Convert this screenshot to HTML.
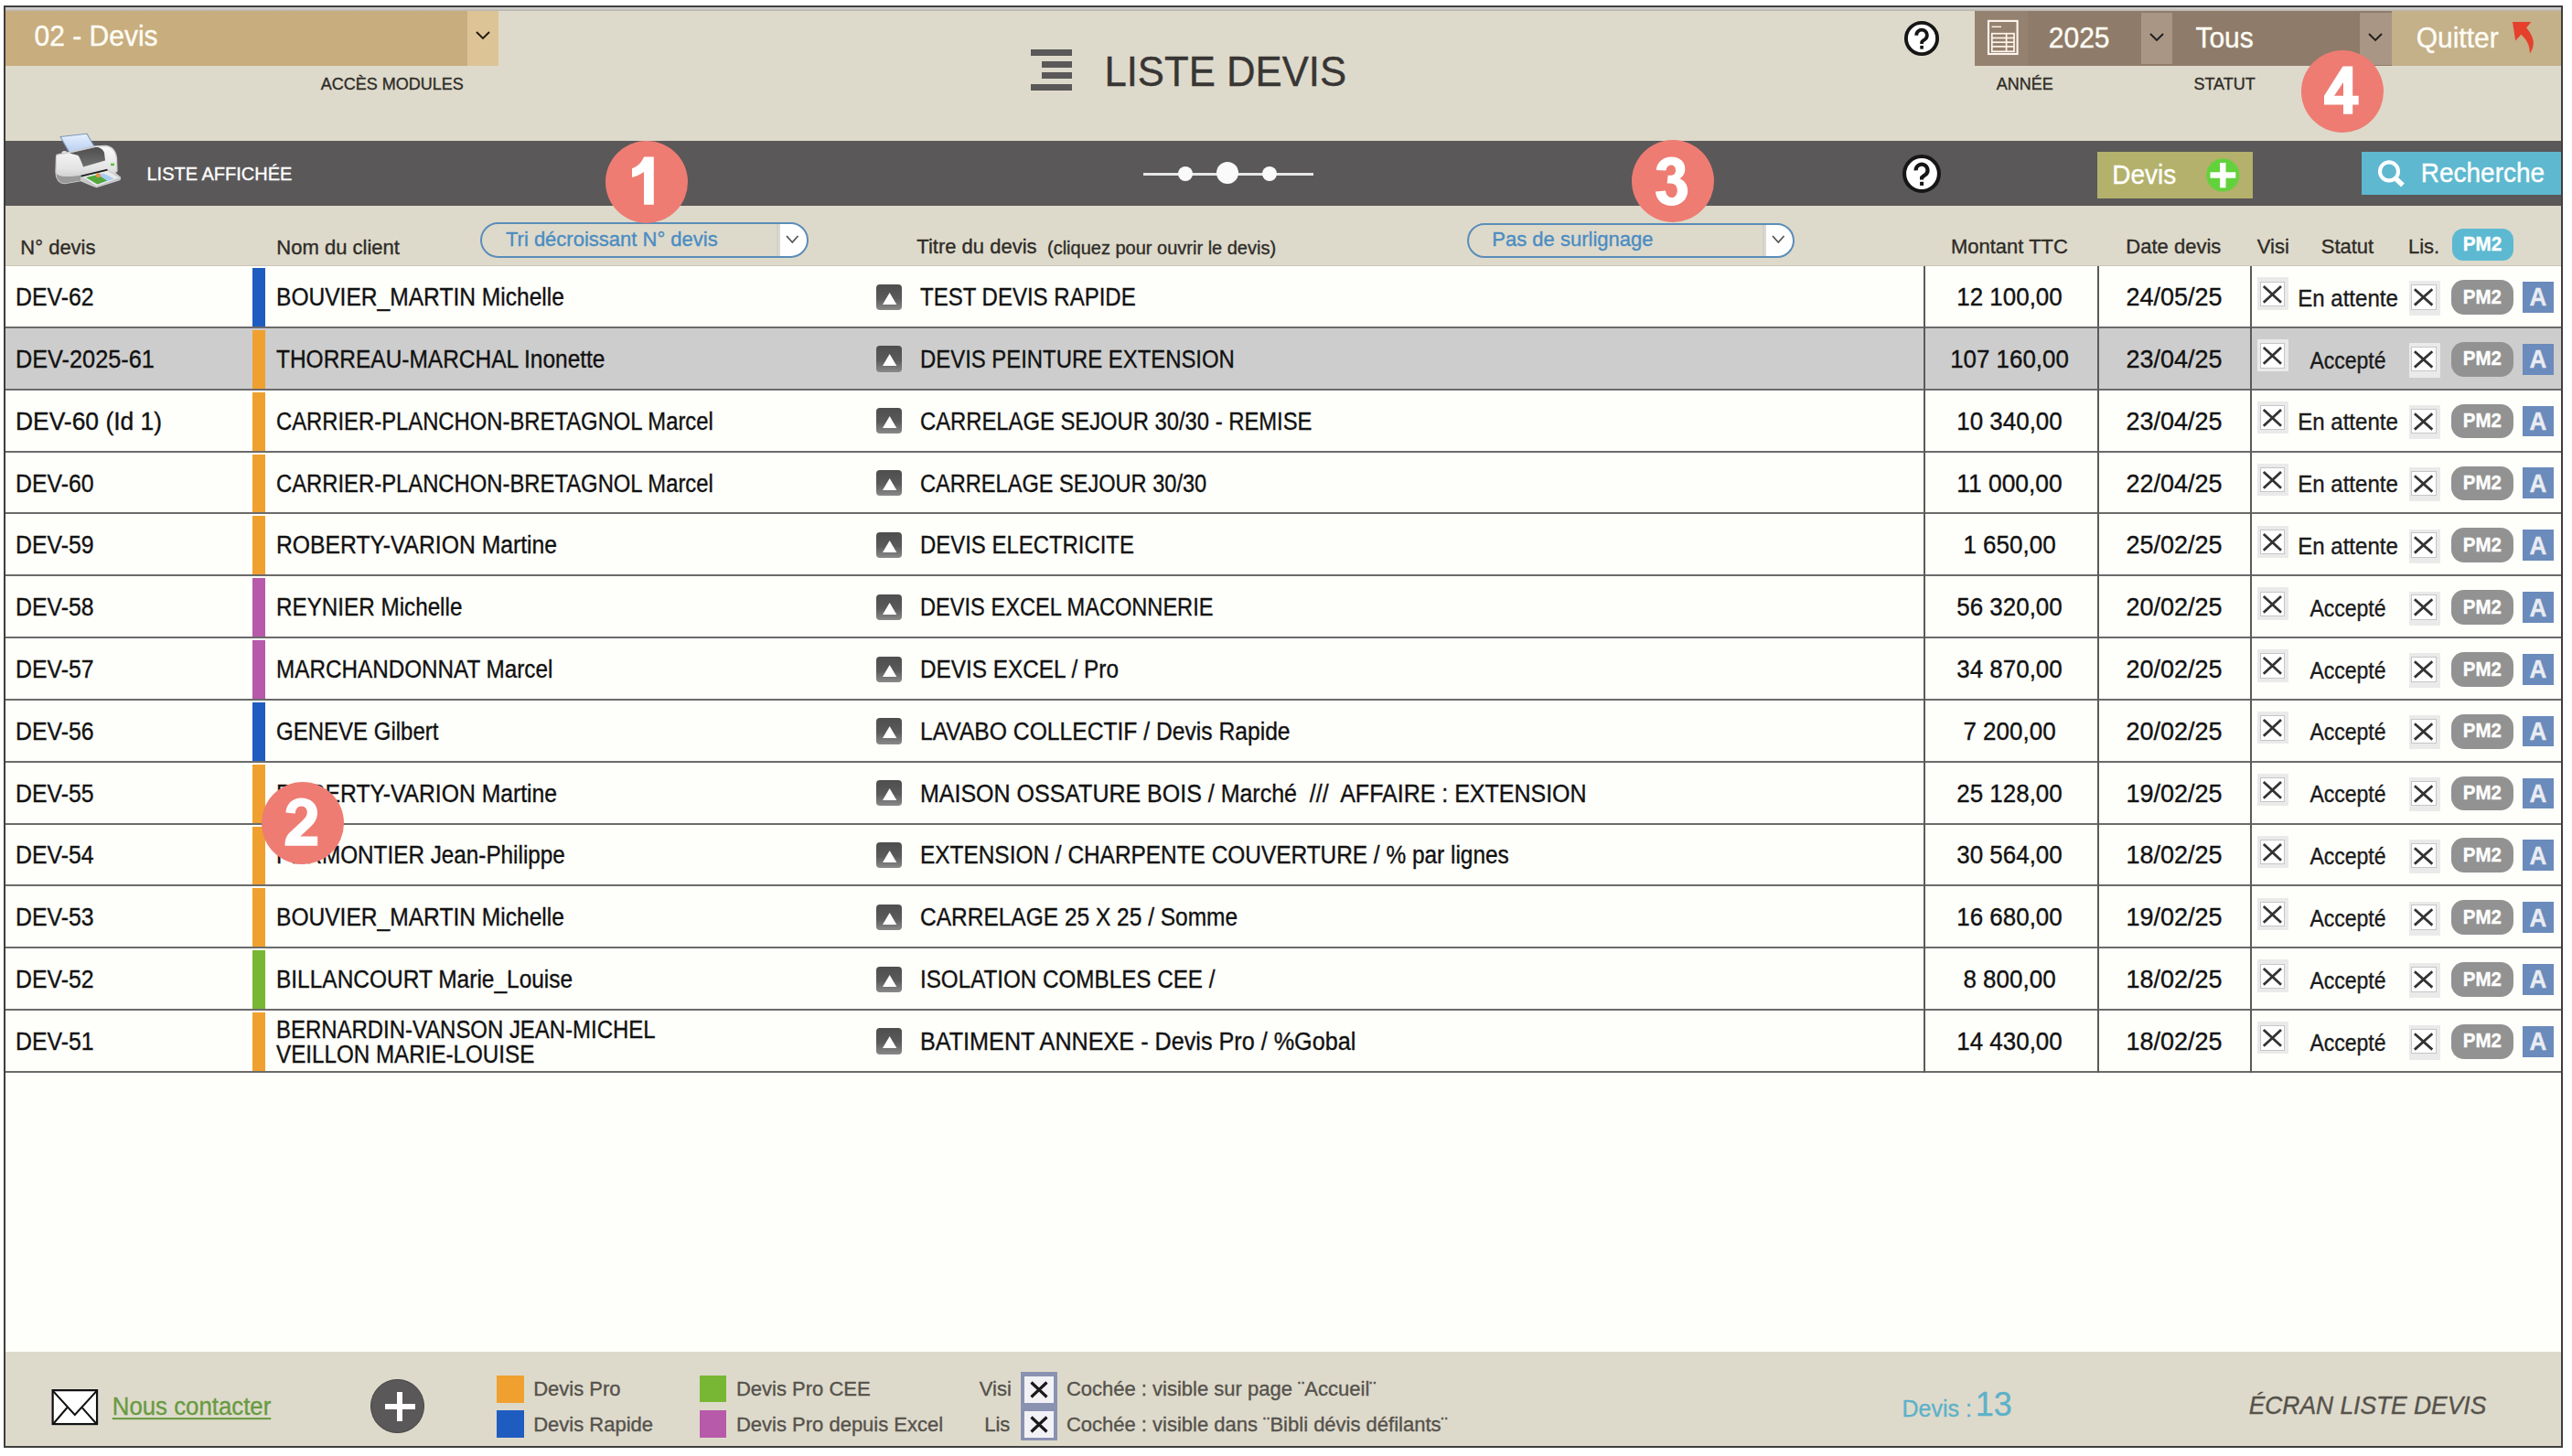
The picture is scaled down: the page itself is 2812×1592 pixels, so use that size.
<!DOCTYPE html><html><head><meta charset="utf-8"><title>Liste devis</title><style>html,body{margin:0;padding:0;background:#FFFFFF;width:2812px;height:1592px;overflow:hidden;}body{position:relative;font-family:"Liberation Sans", sans-serif;} div{-webkit-text-stroke:0.35px currentColor;}</style></head><body>
<div style="position:absolute;left:4.00px;top:6.00px;width:2798.00px;height:1577.00px;background:#3E3E3E;"></div>
<div style="position:absolute;left:6.00px;top:8.00px;width:2794.00px;height:1573.00px;background:#DEDACB;"></div>
<div style="position:absolute;left:6.00px;top:8.00px;width:2794.00px;height:4.00px;background:linear-gradient(#D6D6D6,#B9B4AC);"></div>
<div style="position:absolute;left:6.00px;top:12.00px;width:505.00px;height:60.00px;background:#C8AD7E;"></div>
<div style="position:absolute;left:511.00px;top:12.00px;width:34.00px;height:60.00px;background:#DCC497;"></div>
<svg style="position:absolute;left:519.0px;top:33.1px;overflow:visible" width="18" height="11" viewBox="0 0 18 11"><polyline points="2,2 9.0,9 16,2" fill="none" stroke="#22180C" stroke-width="1.9" stroke-linecap="butt" stroke-linejoin="miter"/></svg>
<div style="position:absolute;left:37.55px;top:24.50px;font-size:30px;line-height:1;white-space:pre;color:#FFFDF5;font-weight:normal;font-style:normal;transform:scale(1.0,1.04);transform-origin:0 25.50px;">02 - Devis</div>
<div style="position:absolute;left:350.82px;top:83.00px;font-size:18px;line-height:1;white-space:pre;color:#2E2C28;font-weight:normal;font-style:normal;transform:scale(1.0,1.04);transform-origin:0 15.30px;">ACCÈS MODULES</div>
<div style="position:absolute;left:1127.00px;top:54.00px;width:45.00px;height:7.00px;background:#5A5858;"></div>
<div style="position:absolute;left:1139.00px;top:66.50px;width:33.00px;height:7.00px;background:#5A5858;"></div>
<div style="position:absolute;left:1139.00px;top:79.30px;width:33.00px;height:7.00px;background:#5A5858;"></div>
<div style="position:absolute;left:1127.00px;top:91.70px;width:45.00px;height:7.00px;background:#5A5858;"></div>
<div style="position:absolute;left:1207.42px;top:56.65px;font-size:43.7px;line-height:1;white-space:pre;color:#383634;font-weight:normal;font-style:normal;transform:scale(1.0,1.04);transform-origin:0 37.15px;">LISTE DEVIS</div>
<svg style="position:absolute;left:2078px;top:19px;overflow:visible" width="46" height="46" viewBox="0 0 46 46"><circle cx="23" cy="23" r="17.1" fill="#FFFFFF" stroke="#161616" stroke-width="3.9"/><g transform="translate(23,23) scale(0.9) translate(-23,-23)"><path d="M16.6,19.4 A6.45,6.45 0 1 1 27.6,23.7 C25.3,25.6 23.1,26.3 23.1,27.6 L23.1,29.6" fill="none" stroke="#161616" stroke-width="4.2"/><rect x="21.1" y="31.8" width="4" height="4.1" fill="#161616"/></g></svg>
<div style="position:absolute;left:2159.00px;top:12.00px;width:456.00px;height:60.00px;background:#8F7B69;"></div>
<div style="position:absolute;left:2159.00px;top:12.00px;width:58.00px;height:60.00px;background:#95816F;"></div>
<div style="position:absolute;left:2340.50px;top:14.00px;width:34.50px;height:56.00px;background:#A99684;"></div>
<svg style="position:absolute;left:2348.5px;top:35.0px;overflow:visible" width="18" height="11" viewBox="0 0 18 11"><polyline points="2,2 9.0,9 16,2" fill="none" stroke="#1E1E1E" stroke-width="1.9" stroke-linecap="butt" stroke-linejoin="miter"/></svg>
<div style="position:absolute;left:2580.00px;top:13.50px;width:35.00px;height:57.00px;background:#A99684;"></div>
<svg style="position:absolute;left:2588.0px;top:35.0px;overflow:visible" width="18" height="11" viewBox="0 0 18 11"><polyline points="2,2 9.0,9 16,2" fill="none" stroke="#1E1E1E" stroke-width="1.9" stroke-linecap="butt" stroke-linejoin="miter"/></svg>
<svg style="position:absolute;left:2172px;top:21px;overflow:visible" width="36" height="40" viewBox="0 0 36 40"><rect x="2" y="1.9" width="31.6" height="36.1" fill="none" stroke="#FFF6EE" stroke-width="2.1"/><line x1="5.5" y1="8.3" x2="16" y2="8.3" stroke="#FFF6EE" stroke-width="1.4"/><rect x="5.8" y="15.7" width="24.2" height="19.6" fill="none" stroke="#FFF6EE" stroke-width="1.7"/><line x1="5.8" y1="20.5" x2="30" y2="20.5" stroke="#FFF6EE" stroke-width="1.7"/><line x1="5.8" y1="25.2" x2="30" y2="25.2" stroke="#FFF6EE" stroke-width="1.7"/><line x1="5.8" y1="29.9" x2="30" y2="29.9" stroke="#FFF6EE" stroke-width="1.7"/><line x1="21.6" y1="15.7" x2="21.6" y2="35.3" stroke="#FFF6EE" stroke-width="1.7"/></svg>
<div style="position:absolute;left:2239.80px;top:26.50px;font-size:30px;line-height:1;white-space:pre;color:#FFFDF5;font-weight:normal;font-style:normal;transform:scale(1.0,1.04);transform-origin:0 25.50px;">2025</div>
<div style="position:absolute;left:2400.40px;top:26.50px;font-size:30px;line-height:1;white-space:pre;color:#FFFDF5;font-weight:normal;font-style:normal;transform:scale(1.0,1.04);transform-origin:0 25.50px;">Tous</div>
<div style="position:absolute;left:2615.00px;top:12.00px;width:185.00px;height:60.00px;background:#C4B089;"></div>
<div style="position:absolute;left:2641.65px;top:26.90px;font-size:30px;line-height:1;white-space:pre;color:#FFFDF5;font-weight:normal;font-style:normal;transform:scale(1.0,1.04);transform-origin:0 25.50px;">Quitter</div>
<svg style="position:absolute;left:2730px;top:15px;overflow:visible" width="50" height="50" viewBox="0 0 50 50"><path d="M17,9.1 L37.2,9.1 L32.1,15.5 C37,21 40,27 39.8,33 C39.6,37 38,41 35.9,43.4 C36,37 34,31 30,26.5 C28.5,25 27.5,23.8 26.4,22.7 L20.2,29.5 Z" fill="#E5402B"/></svg>
<div style="position:absolute;left:2182.82px;top:83.00px;font-size:18px;line-height:1;white-space:pre;color:#2E2C28;font-weight:normal;font-style:normal;transform:scale(1.0,1.04);transform-origin:0 15.30px;">ANNÉE</div>
<div style="position:absolute;left:2398.46px;top:83.00px;font-size:18px;line-height:1;white-space:pre;color:#2E2C28;font-weight:normal;font-style:normal;transform:scale(1.0,1.04);transform-origin:0 15.30px;">STATUT</div>
<div style="position:absolute;left:6.00px;top:154.00px;width:2794.00px;height:71.00px;background:#5A5859;"></div>
<svg style="position:absolute;left:55px;top:140px;overflow:visible" width="85" height="70" viewBox="0 0 85 70"><defs><linearGradient id="pb" x1="0" y1="0" x2="0" y2="1"><stop offset="0" stop-color="#FAFAFA"/><stop offset="0.55" stop-color="#E4E4E4"/><stop offset="1" stop-color="#B8B8B8"/></linearGradient><linearGradient id="pp" x1="0" y1="0" x2="0" y2="1"><stop offset="0" stop-color="#E8F1FF"/><stop offset="1" stop-color="#B4CDF0"/></linearGradient><linearGradient id="pc" x1="0" y1="0" x2="0" y2="1"><stop offset="0" stop-color="#4E4E4E"/><stop offset="1" stop-color="#707070"/></linearGradient></defs><path d="M11,9.5 L40,6.3 L48,20 L21,27 Z" fill="url(#pp)" stroke="#7F96B6" stroke-width="1.1"/><ellipse cx="15.5" cy="27" rx="3" ry="2" fill="#E0E0E0"/><path d="M8.5,29 L21.5,26.5 L49.5,20 L60,19.5 C68,20 71.5,26 72.5,33 L73,47 L70.5,49 L76.5,54 L76,56.5 L50.5,64.5 L47,63.5 L33,57.5 L16,60.5 C9,60.5 6,55 6,48 L6.5,32 C6.5,30 7.5,29 8.5,29 Z" fill="url(#pb)" stroke="#CFCFCF" stroke-width="1.3"/><path d="M6.6,50 C10,53.5 20,54 33,51.8 L33,57.5 L16,60.5 C10,60.5 7,56 6.6,50 Z" fill="#999999"/><path d="M21,27.5 L49.5,21 C54,20.5 57.5,23 59,27 L60,35.5 L36,42.5 C34.5,38 32.5,33 30.5,30 Z" fill="url(#pc)"/><path d="M33.5,53 L62.5,46 L76.5,54.5 L50.5,64 Z" fill="#E9E9E9" stroke="#BDBDBD" stroke-width="0.8"/><path d="M39,54 L58,49.5 L70,55.5 L51.5,61.5 Z" fill="#A8CDF2"/><path d="M39,54 L52,51 L62,57.5 L51.5,61.5 Z" fill="#52A83A"/><circle cx="52.5" cy="51.8" r="2.5" fill="#E8904A"/><path d="M33.5,52.6 L62.5,45.6" stroke="#1E1E1E" stroke-width="1.8"/><rect x="66" y="38.6" width="4" height="2.6" fill="#5CC13A"/></svg>
<div style="position:absolute;left:160.50px;top:179.60px;font-size:20px;line-height:1;white-space:pre;color:#FFFFFF;font-weight:normal;font-style:normal;transform:scale(1.0,1.04);transform-origin:0 17.00px;">LISTE AFFICHÉE</div>
<div style="position:absolute;left:1250.00px;top:189.40px;width:186.00px;height:2.20px;background:#E6E6E6;"></div>
<div style="position:absolute;left:1288px;top:182.4px;width:16px;height:16px;border-radius:50%;background:#FAFAFA"></div>
<div style="position:absolute;left:1330px;top:177.4px;width:24px;height:24px;border-radius:50%;background:#FAFAFA"></div>
<div style="position:absolute;left:1380px;top:182.4px;width:16px;height:16px;border-radius:50%;background:#FAFAFA"></div>
<svg style="position:absolute;left:2078px;top:166.7px;overflow:visible" width="46" height="46" viewBox="0 0 46 46"><circle cx="23" cy="23" r="18.95" fill="#FFFFFF" stroke="#161616" stroke-width="4.1"/><path d="M16.6,19.4 A6.45,6.45 0 1 1 27.6,23.7 C25.3,25.6 23.1,26.3 23.1,27.6 L23.1,29.6" fill="none" stroke="#161616" stroke-width="4.2"/><rect x="21.1" y="31.8" width="4" height="4.1" fill="#161616"/></svg>
<div style="position:absolute;left:2292.50px;top:165.70px;width:170.10px;height:51.60px;background:#B3B16B;"></div>
<div style="position:absolute;left:2309.26px;top:177.60px;font-size:28px;line-height:1;white-space:pre;color:#FFFFFF;font-weight:normal;font-style:normal;transform:scale(1.0,1.04);transform-origin:0 23.80px;">Devis</div>
<svg style="position:absolute;left:2410px;top:171px;overflow:visible" width="42" height="42" viewBox="0 0 42 42"><circle cx="20.3" cy="20.5" r="18" fill="#62D23C"/><rect x="17.1" y="7" width="6.4" height="27.3" fill="#FFFFFF"/><rect x="6.5" y="17.3" width="27.8" height="6.4" fill="#FFFFFF"/></svg>
<div style="position:absolute;left:2582.00px;top:166.00px;width:218.00px;height:47.00px;background:#5EB8CF;"></div>
<svg style="position:absolute;left:2595px;top:172px;overflow:visible" width="40" height="40" viewBox="0 0 40 40"><circle cx="17" cy="15.4" r="10" fill="none" stroke="#FFFFFF" stroke-width="4.1"/><line x1="24" y1="23" x2="32" y2="30.5" stroke="#FFFFFF" stroke-width="5.5"/></svg>
<div style="position:absolute;left:2646.76px;top:176.20px;font-size:28px;line-height:1;white-space:pre;color:#FFFFFF;font-weight:normal;font-style:normal;transform:scale(1.0,1.04);transform-origin:0 23.80px;">Recherche</div>
<div style="position:absolute;left:22.35px;top:259.60px;font-size:22px;line-height:1;white-space:pre;color:#2E2C28;font-weight:normal;font-style:normal;transform:scale(1.0,1.04);transform-origin:0 18.70px;">N° devis</div>
<div style="position:absolute;left:302.35px;top:259.70px;font-size:22px;line-height:1;white-space:pre;color:#2E2C28;font-weight:normal;font-style:normal;transform:scale(1.0,1.04);transform-origin:0 18.70px;">Nom du client</div>
<div style="position:absolute;left:1002.34px;top:259.10px;font-size:22px;line-height:1;white-space:pre;color:#2E2C28;font-weight:normal;font-style:normal;transform:scale(1.0,1.04);transform-origin:0 18.70px;">Titre du devis</div>
<div style="position:absolute;left:1145.00px;top:260.80px;font-size:20px;line-height:1;white-space:pre;color:#2E2C28;font-weight:normal;font-style:normal;transform:scale(1.0,1.04);transform-origin:0 17.00px;">(cliquez pour ouvrir le devis)</div>
<div style="position:absolute;left:2132.95px;top:258.90px;font-size:22px;line-height:1;white-space:pre;color:#2E2C28;font-weight:normal;font-style:normal;transform:scale(1.0,1.04);transform-origin:0 18.70px;">Montant TTC</div>
<div style="position:absolute;left:2324.35px;top:258.90px;font-size:22px;line-height:1;white-space:pre;color:#2E2C28;font-weight:normal;font-style:normal;transform:scale(1.0,1.04);transform-origin:0 18.70px;">Date devis</div>
<div style="position:absolute;left:2467.78px;top:258.90px;font-size:22px;line-height:1;white-space:pre;color:#2E2C28;font-weight:normal;font-style:normal;transform:scale(1.0,1.04);transform-origin:0 18.70px;">Visi</div>
<div style="position:absolute;left:2537.72px;top:258.90px;font-size:22px;line-height:1;white-space:pre;color:#2E2C28;font-weight:normal;font-style:normal;transform:scale(1.0,1.04);transform-origin:0 18.70px;">Statut</div>
<div style="position:absolute;left:2632.95px;top:258.90px;font-size:22px;line-height:1;white-space:pre;color:#2E2C28;font-weight:normal;font-style:normal;transform:scale(1.0,1.04);transform-origin:0 18.70px;">Lis.</div>
<div style="position:absolute;left:2680.5px;top:249.6px;width:67.2px;height:35.1px;border-radius:12px;background:#5CB9D1"></div>
<div style="position:absolute;left:2214.10px;top:256.61px;width:1000px;text-align:center;font-size:20.7px;line-height:1;white-space:pre;color:#FFFFFF;font-weight:bold;font-style:normal;transform:scale(1.0,1.04);transform-origin:50% 17.59px;">PM2</div>
<div style="position:absolute;left:525.00px;top:243.40px;width:359.00px;height:38.90px;box-sizing:border-box;border:2.1px solid #5A8DB8;border-radius:20px;background:linear-gradient(90deg,#DEDACB 0,#DEDACB 325.7px,#FFFFFF 325.7px);"></div>
<div style="position:absolute;left:849.20px;top:245.40px;width:1.50px;height:34.90px;background:#D0D0D0;"></div>
<svg style="position:absolute;left:858.1px;top:255.85000000000002px;overflow:visible" width="16.5" height="11" viewBox="0 0 16.5 11"><polyline points="2,2 8.25,9 14.5,2" fill="none" stroke="#555555" stroke-width="1.8" stroke-linecap="butt" stroke-linejoin="miter"/></svg>
<div style="position:absolute;left:552.94px;top:251.20px;font-size:22px;line-height:1;white-space:pre;color:#4A8CC2;font-weight:normal;font-style:normal;transform:scale(1.0,1.04);transform-origin:0 18.70px;">Tri décroissant N° devis</div>
<div style="position:absolute;left:1604.00px;top:243.70px;width:358.00px;height:38.30px;box-sizing:border-box;border:2.1px solid #5A8DB8;border-radius:20px;background:linear-gradient(90deg,#DEDACB 0,#DEDACB 324.6px,#FFFFFF 324.6px);"></div>
<div style="position:absolute;left:1927.10px;top:245.70px;width:1.50px;height:34.30px;background:#D0D0D0;"></div>
<svg style="position:absolute;left:1936.05px;top:255.85000000000002px;overflow:visible" width="16.5" height="11" viewBox="0 0 16.5 11"><polyline points="2,2 8.25,9 14.5,2" fill="none" stroke="#555555" stroke-width="1.8" stroke-linecap="butt" stroke-linejoin="miter"/></svg>
<div style="position:absolute;left:1631.34px;top:251.20px;font-size:22px;line-height:1;white-space:pre;color:#4A8CC2;font-weight:normal;font-style:normal;transform:scale(1.0,1.04);transform-origin:0 18.70px;">Pas de surlignage</div>
<div style="position:absolute;left:6.00px;top:289.50px;width:2794.00px;height:1.50px;background:#C9C5B8;"></div>
<div style="position:absolute;left:6.00px;top:291.00px;width:2794.00px;height:1187.00px;background:#FEFEFA;"></div>
<div style="position:absolute;left:6.00px;top:357.00px;width:2794.00px;height:2.00px;background:#6B6B6B;"></div>
<div style="position:absolute;left:276.00px;top:293.00px;width:14.00px;height:64.00px;background:#1F5CC0;"></div>
<div style="position:absolute;left:16.76px;top:312.05px;font-size:27px;line-height:1;white-space:pre;color:#111111;font-weight:normal;font-style:normal;transform:scale(0.9195,1.0);transform-origin:0 22.95px;">DEV-62</div>
<div style="position:absolute;left:302.03px;top:312.05px;font-size:27px;line-height:1;white-space:pre;color:#111111;font-weight:normal;font-style:normal;transform:scale(0.9099,1.0);transform-origin:0 22.95px;">BOUVIER_MARTIN Michelle</div>
<div style="position:absolute;left:957.7px;top:310.60px;width:28.3px;height:28.2px;border-radius:4px;background:linear-gradient(#4E4E4E 0%,#5A5A5A 55%,#8A8A8A 100%);"></div>
<svg style="position:absolute;left:957.7px;top:310.6px;overflow:visible" width="29" height="29" viewBox="0 0 29 29"><polygon points="7,22 22.3,22 14.65,9" fill="#FFFFFF"/></svg>
<div style="position:absolute;left:1005.78px;top:312.05px;font-size:27px;line-height:1;white-space:pre;color:#111111;font-weight:normal;font-style:normal;transform:scale(0.8891,1.0);transform-origin:0 22.95px;">TEST DEVIS RAPIDE</div>
<div style="position:absolute;left:1697.00px;top:312.05px;width:1000px;text-align:center;font-size:27px;line-height:1;white-space:pre;color:#111111;font-weight:normal;font-style:normal;transform:scale(0.9606,1.0);transform-origin:50% 22.95px;">12 100,00</div>
<div style="position:absolute;left:1876.50px;top:312.05px;width:1000px;text-align:center;font-size:27px;line-height:1;white-space:pre;color:#111111;font-weight:normal;font-style:normal;transform:scale(0.9994,1.0);transform-origin:50% 22.95px;">24/05/25</div>
<div style="position:absolute;left:2067.00px;top:313.75px;width:1000px;text-align:center;font-size:25px;line-height:1;white-space:pre;color:#1A1A1A;font-weight:normal;font-style:normal;transform:scale(0.9621,1.0);transform-origin:50% 21.25px;">En attente</div>
<div style="position:absolute;left:2468.20px;top:303.30px;width:34.20px;height:35.30px;background:#EAEAEA;"></div>
<div style="position:absolute;left:2471px;top:307.50px;width:27.3px;height:27.3px;box-sizing:border-box;border:1.6px solid #C6C6C6;background:#FFFFFF"></div>
<svg style="position:absolute;left:2471px;top:307.5px;overflow:visible" width="28" height="28" viewBox="0 0 28 28"><path d="M3.8,5 L23,22.8 M23,5 L3.8,22.8" stroke="#333333" stroke-width="2.8"/></svg>
<div style="position:absolute;left:2634.00px;top:307.40px;width:34.00px;height:37.30px;background:#EAEAEA;"></div>
<div style="position:absolute;left:2636.3px;top:311.20px;width:27.7px;height:27.4px;box-sizing:border-box;border:1.6px solid #C6C6C6;background:#FFFFFF"></div>
<svg style="position:absolute;left:2636.3px;top:311.2px;overflow:visible" width="28" height="28" viewBox="0 0 28 28"><path d="M3.9,5.2 L23.3,22.6 M23.3,5.2 L3.9,22.6" stroke="#333333" stroke-width="2.8"/></svg>
<div style="position:absolute;left:2680px;top:306.10px;width:67.8px;height:37.7px;border-radius:14px;background:#929292"></div>
<div style="position:absolute;left:2213.90px;top:314.57px;width:1000px;text-align:center;font-size:20.5px;line-height:1;white-space:pre;color:#FFFFFF;font-weight:bold;font-style:normal;transform:scale(1.0,1.04);transform-origin:50% 17.43px;">PM2</div>
<div style="position:absolute;left:2758.00px;top:308.00px;width:34.00px;height:33.70px;background:#6A8BBB;"></div>
<div style="position:absolute;left:2275.00px;top:312.40px;width:1000px;text-align:center;font-size:26px;line-height:1;white-space:pre;color:#E9ECF2;font-weight:bold;font-style:normal;transform:scale(1.0,1.04);transform-origin:50% 22.10px;">A</div>
<div style="position:absolute;left:6.00px;top:359.00px;width:2794.00px;height:65.82px;background:#CDCDCD;"></div>
<div style="position:absolute;left:6.00px;top:424.82px;width:2794.00px;height:2.00px;background:#6B6B6B;"></div>
<div style="position:absolute;left:276.00px;top:361.00px;width:14.00px;height:63.82px;background:#F0A02F;"></div>
<div style="position:absolute;left:16.73px;top:379.87px;font-size:27px;line-height:1;white-space:pre;color:#111111;font-weight:normal;font-style:normal;transform:scale(0.9364,1.0);transform-origin:0 22.95px;">DEV-2025-61</div>
<div style="position:absolute;left:302.04px;top:379.87px;font-size:27px;line-height:1;white-space:pre;color:#111111;font-weight:normal;font-style:normal;transform:scale(0.9064,1.0);transform-origin:0 22.95px;">THORREAU-MARCHAL Inonette</div>
<div style="position:absolute;left:957.7px;top:378.42px;width:28.3px;height:28.2px;border-radius:4px;background:linear-gradient(#4E4E4E 0%,#5A5A5A 55%,#8A8A8A 100%);"></div>
<svg style="position:absolute;left:957.7px;top:378.42px;overflow:visible" width="29" height="29" viewBox="0 0 29 29"><polygon points="7,22 22.3,22 14.65,9" fill="#FFFFFF"/></svg>
<div style="position:absolute;left:1005.78px;top:379.87px;font-size:27px;line-height:1;white-space:pre;color:#111111;font-weight:normal;font-style:normal;transform:scale(0.8849,1.0);transform-origin:0 22.95px;">DEVIS PEINTURE EXTENSION</div>
<div style="position:absolute;left:1697.00px;top:379.87px;width:1000px;text-align:center;font-size:27px;line-height:1;white-space:pre;color:#111111;font-weight:normal;font-style:normal;transform:scale(0.9589,1.0);transform-origin:50% 22.95px;">107 160,00</div>
<div style="position:absolute;left:1876.50px;top:379.87px;width:1000px;text-align:center;font-size:27px;line-height:1;white-space:pre;color:#111111;font-weight:normal;font-style:normal;transform:scale(0.9994,1.0);transform-origin:50% 22.95px;">23/04/25</div>
<div style="position:absolute;left:2067.00px;top:381.57px;width:1000px;text-align:center;font-size:25px;line-height:1;white-space:pre;color:#1A1A1A;font-weight:normal;font-style:normal;transform:scale(0.9201,1.0);transform-origin:50% 21.25px;">Accepté</div>
<div style="position:absolute;left:2468.20px;top:371.12px;width:34.20px;height:35.30px;background:#EAEAEA;"></div>
<div style="position:absolute;left:2471px;top:375.32px;width:27.3px;height:27.3px;box-sizing:border-box;border:1.6px solid #C6C6C6;background:#FFFFFF"></div>
<svg style="position:absolute;left:2471px;top:375.32px;overflow:visible" width="28" height="28" viewBox="0 0 28 28"><path d="M3.8,5 L23,22.8 M23,5 L3.8,22.8" stroke="#333333" stroke-width="2.8"/></svg>
<div style="position:absolute;left:2634.00px;top:375.22px;width:34.00px;height:37.30px;background:#EAEAEA;"></div>
<div style="position:absolute;left:2636.3px;top:379.02px;width:27.7px;height:27.4px;box-sizing:border-box;border:1.6px solid #C6C6C6;background:#FFFFFF"></div>
<svg style="position:absolute;left:2636.3px;top:379.02px;overflow:visible" width="28" height="28" viewBox="0 0 28 28"><path d="M3.9,5.2 L23.3,22.6 M23.3,5.2 L3.9,22.6" stroke="#333333" stroke-width="2.8"/></svg>
<div style="position:absolute;left:2680px;top:373.92px;width:67.8px;height:37.7px;border-radius:14px;background:#929292"></div>
<div style="position:absolute;left:2213.90px;top:382.39px;width:1000px;text-align:center;font-size:20.5px;line-height:1;white-space:pre;color:#FFFFFF;font-weight:bold;font-style:normal;transform:scale(1.0,1.04);transform-origin:50% 17.43px;">PM2</div>
<div style="position:absolute;left:2758.00px;top:375.82px;width:34.00px;height:33.70px;background:#6A8BBB;"></div>
<div style="position:absolute;left:2275.00px;top:380.22px;width:1000px;text-align:center;font-size:26px;line-height:1;white-space:pre;color:#E9ECF2;font-weight:bold;font-style:normal;transform:scale(1.0,1.04);transform-origin:50% 22.10px;">A</div>
<div style="position:absolute;left:6.00px;top:492.64px;width:2794.00px;height:2.00px;background:#6B6B6B;"></div>
<div style="position:absolute;left:276.00px;top:428.82px;width:14.00px;height:63.82px;background:#F0A02F;"></div>
<div style="position:absolute;left:16.64px;top:447.69px;font-size:27px;line-height:1;white-space:pre;color:#111111;font-weight:normal;font-style:normal;transform:scale(0.9784,1.0);transform-origin:0 22.95px;">DEV-60 (Id 1)</div>
<div style="position:absolute;left:302.09px;top:447.69px;font-size:27px;line-height:1;white-space:pre;color:#111111;font-weight:normal;font-style:normal;transform:scale(0.8823,1.0);transform-origin:0 22.95px;">CARRIER-PLANCHON-BRETAGNOL Marcel</div>
<div style="position:absolute;left:957.7px;top:446.24px;width:28.3px;height:28.2px;border-radius:4px;background:linear-gradient(#4E4E4E 0%,#5A5A5A 55%,#8A8A8A 100%);"></div>
<svg style="position:absolute;left:957.7px;top:446.24px;overflow:visible" width="29" height="29" viewBox="0 0 29 29"><polygon points="7,22 22.3,22 14.65,9" fill="#FFFFFF"/></svg>
<div style="position:absolute;left:1005.79px;top:447.69px;font-size:27px;line-height:1;white-space:pre;color:#111111;font-weight:normal;font-style:normal;transform:scale(0.8813,1.0);transform-origin:0 22.95px;">CARRELAGE SEJOUR 30/30 - REMISE</div>
<div style="position:absolute;left:1697.00px;top:447.69px;width:1000px;text-align:center;font-size:27px;line-height:1;white-space:pre;color:#111111;font-weight:normal;font-style:normal;transform:scale(0.9606,1.0);transform-origin:50% 22.95px;">10 340,00</div>
<div style="position:absolute;left:1876.50px;top:447.69px;width:1000px;text-align:center;font-size:27px;line-height:1;white-space:pre;color:#111111;font-weight:normal;font-style:normal;transform:scale(0.9994,1.0);transform-origin:50% 22.95px;">23/04/25</div>
<div style="position:absolute;left:2067.00px;top:449.39px;width:1000px;text-align:center;font-size:25px;line-height:1;white-space:pre;color:#1A1A1A;font-weight:normal;font-style:normal;transform:scale(0.9621,1.0);transform-origin:50% 21.25px;">En attente</div>
<div style="position:absolute;left:2468.20px;top:438.94px;width:34.20px;height:35.30px;background:#EAEAEA;"></div>
<div style="position:absolute;left:2471px;top:443.14px;width:27.3px;height:27.3px;box-sizing:border-box;border:1.6px solid #C6C6C6;background:#FFFFFF"></div>
<svg style="position:absolute;left:2471px;top:443.14px;overflow:visible" width="28" height="28" viewBox="0 0 28 28"><path d="M3.8,5 L23,22.8 M23,5 L3.8,22.8" stroke="#333333" stroke-width="2.8"/></svg>
<div style="position:absolute;left:2634.00px;top:443.04px;width:34.00px;height:37.30px;background:#EAEAEA;"></div>
<div style="position:absolute;left:2636.3px;top:446.84px;width:27.7px;height:27.4px;box-sizing:border-box;border:1.6px solid #C6C6C6;background:#FFFFFF"></div>
<svg style="position:absolute;left:2636.3px;top:446.84px;overflow:visible" width="28" height="28" viewBox="0 0 28 28"><path d="M3.9,5.2 L23.3,22.6 M23.3,5.2 L3.9,22.6" stroke="#333333" stroke-width="2.8"/></svg>
<div style="position:absolute;left:2680px;top:441.74px;width:67.8px;height:37.7px;border-radius:14px;background:#929292"></div>
<div style="position:absolute;left:2213.90px;top:450.21px;width:1000px;text-align:center;font-size:20.5px;line-height:1;white-space:pre;color:#FFFFFF;font-weight:bold;font-style:normal;transform:scale(1.0,1.04);transform-origin:50% 17.43px;">PM2</div>
<div style="position:absolute;left:2758.00px;top:443.64px;width:34.00px;height:33.70px;background:#6A8BBB;"></div>
<div style="position:absolute;left:2275.00px;top:448.04px;width:1000px;text-align:center;font-size:26px;line-height:1;white-space:pre;color:#E9ECF2;font-weight:bold;font-style:normal;transform:scale(1.0,1.04);transform-origin:50% 22.10px;">A</div>
<div style="position:absolute;left:6.00px;top:560.46px;width:2794.00px;height:2.00px;background:#6B6B6B;"></div>
<div style="position:absolute;left:276.00px;top:496.64px;width:14.00px;height:63.82px;background:#F0A02F;"></div>
<div style="position:absolute;left:16.76px;top:515.51px;font-size:27px;line-height:1;white-space:pre;color:#111111;font-weight:normal;font-style:normal;transform:scale(0.9195,1.0);transform-origin:0 22.95px;">DEV-60</div>
<div style="position:absolute;left:302.09px;top:515.51px;font-size:27px;line-height:1;white-space:pre;color:#111111;font-weight:normal;font-style:normal;transform:scale(0.8823,1.0);transform-origin:0 22.95px;">CARRIER-PLANCHON-BRETAGNOL Marcel</div>
<div style="position:absolute;left:957.7px;top:514.06px;width:28.3px;height:28.2px;border-radius:4px;background:linear-gradient(#4E4E4E 0%,#5A5A5A 55%,#8A8A8A 100%);"></div>
<svg style="position:absolute;left:957.7px;top:514.06px;overflow:visible" width="29" height="29" viewBox="0 0 29 29"><polygon points="7,22 22.3,22 14.65,9" fill="#FFFFFF"/></svg>
<div style="position:absolute;left:1005.79px;top:515.51px;font-size:27px;line-height:1;white-space:pre;color:#111111;font-weight:normal;font-style:normal;transform:scale(0.8733,1.0);transform-origin:0 22.95px;">CARRELAGE SEJOUR 30/30</div>
<div style="position:absolute;left:1697.00px;top:515.51px;width:1000px;text-align:center;font-size:27px;line-height:1;white-space:pre;color:#111111;font-weight:normal;font-style:normal;transform:scale(0.9769,1.0);transform-origin:50% 22.95px;">11 000,00</div>
<div style="position:absolute;left:1876.50px;top:515.51px;width:1000px;text-align:center;font-size:27px;line-height:1;white-space:pre;color:#111111;font-weight:normal;font-style:normal;transform:scale(0.9994,1.0);transform-origin:50% 22.95px;">22/04/25</div>
<div style="position:absolute;left:2067.00px;top:517.21px;width:1000px;text-align:center;font-size:25px;line-height:1;white-space:pre;color:#1A1A1A;font-weight:normal;font-style:normal;transform:scale(0.9621,1.0);transform-origin:50% 21.25px;">En attente</div>
<div style="position:absolute;left:2468.20px;top:506.76px;width:34.20px;height:35.30px;background:#EAEAEA;"></div>
<div style="position:absolute;left:2471px;top:510.96px;width:27.3px;height:27.3px;box-sizing:border-box;border:1.6px solid #C6C6C6;background:#FFFFFF"></div>
<svg style="position:absolute;left:2471px;top:510.96px;overflow:visible" width="28" height="28" viewBox="0 0 28 28"><path d="M3.8,5 L23,22.8 M23,5 L3.8,22.8" stroke="#333333" stroke-width="2.8"/></svg>
<div style="position:absolute;left:2634.00px;top:510.86px;width:34.00px;height:37.30px;background:#EAEAEA;"></div>
<div style="position:absolute;left:2636.3px;top:514.66px;width:27.7px;height:27.4px;box-sizing:border-box;border:1.6px solid #C6C6C6;background:#FFFFFF"></div>
<svg style="position:absolute;left:2636.3px;top:514.66px;overflow:visible" width="28" height="28" viewBox="0 0 28 28"><path d="M3.9,5.2 L23.3,22.6 M23.3,5.2 L3.9,22.6" stroke="#333333" stroke-width="2.8"/></svg>
<div style="position:absolute;left:2680px;top:509.56px;width:67.8px;height:37.7px;border-radius:14px;background:#929292"></div>
<div style="position:absolute;left:2213.90px;top:518.04px;width:1000px;text-align:center;font-size:20.5px;line-height:1;white-space:pre;color:#FFFFFF;font-weight:bold;font-style:normal;transform:scale(1.0,1.04);transform-origin:50% 17.43px;">PM2</div>
<div style="position:absolute;left:2758.00px;top:511.46px;width:34.00px;height:33.70px;background:#6A8BBB;"></div>
<div style="position:absolute;left:2275.00px;top:515.86px;width:1000px;text-align:center;font-size:26px;line-height:1;white-space:pre;color:#E9ECF2;font-weight:bold;font-style:normal;transform:scale(1.0,1.04);transform-origin:50% 22.10px;">A</div>
<div style="position:absolute;left:6.00px;top:628.28px;width:2794.00px;height:2.00px;background:#6B6B6B;"></div>
<div style="position:absolute;left:276.00px;top:564.46px;width:14.00px;height:63.82px;background:#F0A02F;"></div>
<div style="position:absolute;left:16.76px;top:583.33px;font-size:27px;line-height:1;white-space:pre;color:#111111;font-weight:normal;font-style:normal;transform:scale(0.9195,1.0);transform-origin:0 22.95px;">DEV-59</div>
<div style="position:absolute;left:302.02px;top:583.33px;font-size:27px;line-height:1;white-space:pre;color:#111111;font-weight:normal;font-style:normal;transform:scale(0.9148,1.0);transform-origin:0 22.95px;">ROBERTY-VARION Martine</div>
<div style="position:absolute;left:957.7px;top:581.88px;width:28.3px;height:28.2px;border-radius:4px;background:linear-gradient(#4E4E4E 0%,#5A5A5A 55%,#8A8A8A 100%);"></div>
<svg style="position:absolute;left:957.7px;top:581.88px;overflow:visible" width="29" height="29" viewBox="0 0 29 29"><polygon points="7,22 22.3,22 14.65,9" fill="#FFFFFF"/></svg>
<div style="position:absolute;left:1005.78px;top:583.33px;font-size:27px;line-height:1;white-space:pre;color:#111111;font-weight:normal;font-style:normal;transform:scale(0.8859,1.0);transform-origin:0 22.95px;">DEVIS ELECTRICITE</div>
<div style="position:absolute;left:1697.00px;top:583.33px;width:1000px;text-align:center;font-size:27px;line-height:1;white-space:pre;color:#111111;font-weight:normal;font-style:normal;transform:scale(0.9628,1.0);transform-origin:50% 22.95px;">1 650,00</div>
<div style="position:absolute;left:1876.50px;top:583.33px;width:1000px;text-align:center;font-size:27px;line-height:1;white-space:pre;color:#111111;font-weight:normal;font-style:normal;transform:scale(0.9994,1.0);transform-origin:50% 22.95px;">25/02/25</div>
<div style="position:absolute;left:2067.00px;top:585.03px;width:1000px;text-align:center;font-size:25px;line-height:1;white-space:pre;color:#1A1A1A;font-weight:normal;font-style:normal;transform:scale(0.9621,1.0);transform-origin:50% 21.25px;">En attente</div>
<div style="position:absolute;left:2468.20px;top:574.58px;width:34.20px;height:35.30px;background:#EAEAEA;"></div>
<div style="position:absolute;left:2471px;top:578.78px;width:27.3px;height:27.3px;box-sizing:border-box;border:1.6px solid #C6C6C6;background:#FFFFFF"></div>
<svg style="position:absolute;left:2471px;top:578.78px;overflow:visible" width="28" height="28" viewBox="0 0 28 28"><path d="M3.8,5 L23,22.8 M23,5 L3.8,22.8" stroke="#333333" stroke-width="2.8"/></svg>
<div style="position:absolute;left:2634.00px;top:578.68px;width:34.00px;height:37.30px;background:#EAEAEA;"></div>
<div style="position:absolute;left:2636.3px;top:582.48px;width:27.7px;height:27.4px;box-sizing:border-box;border:1.6px solid #C6C6C6;background:#FFFFFF"></div>
<svg style="position:absolute;left:2636.3px;top:582.48px;overflow:visible" width="28" height="28" viewBox="0 0 28 28"><path d="M3.9,5.2 L23.3,22.6 M23.3,5.2 L3.9,22.6" stroke="#333333" stroke-width="2.8"/></svg>
<div style="position:absolute;left:2680px;top:577.38px;width:67.8px;height:37.7px;border-radius:14px;background:#929292"></div>
<div style="position:absolute;left:2213.90px;top:585.86px;width:1000px;text-align:center;font-size:20.5px;line-height:1;white-space:pre;color:#FFFFFF;font-weight:bold;font-style:normal;transform:scale(1.0,1.04);transform-origin:50% 17.43px;">PM2</div>
<div style="position:absolute;left:2758.00px;top:579.28px;width:34.00px;height:33.70px;background:#6A8BBB;"></div>
<div style="position:absolute;left:2275.00px;top:583.68px;width:1000px;text-align:center;font-size:26px;line-height:1;white-space:pre;color:#E9ECF2;font-weight:bold;font-style:normal;transform:scale(1.0,1.04);transform-origin:50% 22.10px;">A</div>
<div style="position:absolute;left:6.00px;top:696.10px;width:2794.00px;height:2.00px;background:#6B6B6B;"></div>
<div style="position:absolute;left:276.00px;top:632.28px;width:14.00px;height:63.82px;background:#B75AA9;"></div>
<div style="position:absolute;left:16.76px;top:651.15px;font-size:27px;line-height:1;white-space:pre;color:#111111;font-weight:normal;font-style:normal;transform:scale(0.9195,1.0);transform-origin:0 22.95px;">DEV-58</div>
<div style="position:absolute;left:302.06px;top:651.15px;font-size:27px;line-height:1;white-space:pre;color:#111111;font-weight:normal;font-style:normal;transform:scale(0.8976,1.0);transform-origin:0 22.95px;">REYNIER Michelle</div>
<div style="position:absolute;left:957.7px;top:649.70px;width:28.3px;height:28.2px;border-radius:4px;background:linear-gradient(#4E4E4E 0%,#5A5A5A 55%,#8A8A8A 100%);"></div>
<svg style="position:absolute;left:957.7px;top:649.7px;overflow:visible" width="29" height="29" viewBox="0 0 29 29"><polygon points="7,22 22.3,22 14.65,9" fill="#FFFFFF"/></svg>
<div style="position:absolute;left:1005.79px;top:651.15px;font-size:27px;line-height:1;white-space:pre;color:#111111;font-weight:normal;font-style:normal;transform:scale(0.8742,1.0);transform-origin:0 22.95px;">DEVIS EXCEL MACONNERIE</div>
<div style="position:absolute;left:1697.00px;top:651.15px;width:1000px;text-align:center;font-size:27px;line-height:1;white-space:pre;color:#111111;font-weight:normal;font-style:normal;transform:scale(0.9606,1.0);transform-origin:50% 22.95px;">56 320,00</div>
<div style="position:absolute;left:1876.50px;top:651.15px;width:1000px;text-align:center;font-size:27px;line-height:1;white-space:pre;color:#111111;font-weight:normal;font-style:normal;transform:scale(0.9994,1.0);transform-origin:50% 22.95px;">20/02/25</div>
<div style="position:absolute;left:2067.00px;top:652.85px;width:1000px;text-align:center;font-size:25px;line-height:1;white-space:pre;color:#1A1A1A;font-weight:normal;font-style:normal;transform:scale(0.9201,1.0);transform-origin:50% 21.25px;">Accepté</div>
<div style="position:absolute;left:2468.20px;top:642.40px;width:34.20px;height:35.30px;background:#EAEAEA;"></div>
<div style="position:absolute;left:2471px;top:646.60px;width:27.3px;height:27.3px;box-sizing:border-box;border:1.6px solid #C6C6C6;background:#FFFFFF"></div>
<svg style="position:absolute;left:2471px;top:646.6px;overflow:visible" width="28" height="28" viewBox="0 0 28 28"><path d="M3.8,5 L23,22.8 M23,5 L3.8,22.8" stroke="#333333" stroke-width="2.8"/></svg>
<div style="position:absolute;left:2634.00px;top:646.50px;width:34.00px;height:37.30px;background:#EAEAEA;"></div>
<div style="position:absolute;left:2636.3px;top:650.30px;width:27.7px;height:27.4px;box-sizing:border-box;border:1.6px solid #C6C6C6;background:#FFFFFF"></div>
<svg style="position:absolute;left:2636.3px;top:650.3px;overflow:visible" width="28" height="28" viewBox="0 0 28 28"><path d="M3.9,5.2 L23.3,22.6 M23.3,5.2 L3.9,22.6" stroke="#333333" stroke-width="2.8"/></svg>
<div style="position:absolute;left:2680px;top:645.20px;width:67.8px;height:37.7px;border-radius:14px;background:#929292"></div>
<div style="position:absolute;left:2213.90px;top:653.67px;width:1000px;text-align:center;font-size:20.5px;line-height:1;white-space:pre;color:#FFFFFF;font-weight:bold;font-style:normal;transform:scale(1.0,1.04);transform-origin:50% 17.43px;">PM2</div>
<div style="position:absolute;left:2758.00px;top:647.10px;width:34.00px;height:33.70px;background:#6A8BBB;"></div>
<div style="position:absolute;left:2275.00px;top:651.50px;width:1000px;text-align:center;font-size:26px;line-height:1;white-space:pre;color:#E9ECF2;font-weight:bold;font-style:normal;transform:scale(1.0,1.04);transform-origin:50% 22.10px;">A</div>
<div style="position:absolute;left:6.00px;top:763.92px;width:2794.00px;height:2.00px;background:#6B6B6B;"></div>
<div style="position:absolute;left:276.00px;top:700.10px;width:14.00px;height:63.82px;background:#B75AA9;"></div>
<div style="position:absolute;left:16.76px;top:718.97px;font-size:27px;line-height:1;white-space:pre;color:#111111;font-weight:normal;font-style:normal;transform:scale(0.9195,1.0);transform-origin:0 22.95px;">DEV-57</div>
<div style="position:absolute;left:302.06px;top:718.97px;font-size:27px;line-height:1;white-space:pre;color:#111111;font-weight:normal;font-style:normal;transform:scale(0.8985,1.0);transform-origin:0 22.95px;">MARCHANDONNAT Marcel</div>
<div style="position:absolute;left:957.7px;top:717.52px;width:28.3px;height:28.2px;border-radius:4px;background:linear-gradient(#4E4E4E 0%,#5A5A5A 55%,#8A8A8A 100%);"></div>
<svg style="position:absolute;left:957.7px;top:717.52px;overflow:visible" width="29" height="29" viewBox="0 0 29 29"><polygon points="7,22 22.3,22 14.65,9" fill="#FFFFFF"/></svg>
<div style="position:absolute;left:1005.77px;top:718.97px;font-size:27px;line-height:1;white-space:pre;color:#111111;font-weight:normal;font-style:normal;transform:scale(0.9016,1.0);transform-origin:0 22.95px;">DEVIS EXCEL / Pro</div>
<div style="position:absolute;left:1697.00px;top:718.97px;width:1000px;text-align:center;font-size:27px;line-height:1;white-space:pre;color:#111111;font-weight:normal;font-style:normal;transform:scale(0.9606,1.0);transform-origin:50% 22.95px;">34 870,00</div>
<div style="position:absolute;left:1876.50px;top:718.97px;width:1000px;text-align:center;font-size:27px;line-height:1;white-space:pre;color:#111111;font-weight:normal;font-style:normal;transform:scale(0.9994,1.0);transform-origin:50% 22.95px;">20/02/25</div>
<div style="position:absolute;left:2067.00px;top:720.67px;width:1000px;text-align:center;font-size:25px;line-height:1;white-space:pre;color:#1A1A1A;font-weight:normal;font-style:normal;transform:scale(0.9201,1.0);transform-origin:50% 21.25px;">Accepté</div>
<div style="position:absolute;left:2468.20px;top:710.22px;width:34.20px;height:35.30px;background:#EAEAEA;"></div>
<div style="position:absolute;left:2471px;top:714.42px;width:27.3px;height:27.3px;box-sizing:border-box;border:1.6px solid #C6C6C6;background:#FFFFFF"></div>
<svg style="position:absolute;left:2471px;top:714.42px;overflow:visible" width="28" height="28" viewBox="0 0 28 28"><path d="M3.8,5 L23,22.8 M23,5 L3.8,22.8" stroke="#333333" stroke-width="2.8"/></svg>
<div style="position:absolute;left:2634.00px;top:714.32px;width:34.00px;height:37.30px;background:#EAEAEA;"></div>
<div style="position:absolute;left:2636.3px;top:718.12px;width:27.7px;height:27.4px;box-sizing:border-box;border:1.6px solid #C6C6C6;background:#FFFFFF"></div>
<svg style="position:absolute;left:2636.3px;top:718.12px;overflow:visible" width="28" height="28" viewBox="0 0 28 28"><path d="M3.9,5.2 L23.3,22.6 M23.3,5.2 L3.9,22.6" stroke="#333333" stroke-width="2.8"/></svg>
<div style="position:absolute;left:2680px;top:713.02px;width:67.8px;height:37.7px;border-radius:14px;background:#929292"></div>
<div style="position:absolute;left:2213.90px;top:721.50px;width:1000px;text-align:center;font-size:20.5px;line-height:1;white-space:pre;color:#FFFFFF;font-weight:bold;font-style:normal;transform:scale(1.0,1.04);transform-origin:50% 17.43px;">PM2</div>
<div style="position:absolute;left:2758.00px;top:714.92px;width:34.00px;height:33.70px;background:#6A8BBB;"></div>
<div style="position:absolute;left:2275.00px;top:719.32px;width:1000px;text-align:center;font-size:26px;line-height:1;white-space:pre;color:#E9ECF2;font-weight:bold;font-style:normal;transform:scale(1.0,1.04);transform-origin:50% 22.10px;">A</div>
<div style="position:absolute;left:6.00px;top:831.74px;width:2794.00px;height:2.00px;background:#6B6B6B;"></div>
<div style="position:absolute;left:276.00px;top:767.92px;width:14.00px;height:63.82px;background:#1F5CC0;"></div>
<div style="position:absolute;left:16.76px;top:786.79px;font-size:27px;line-height:1;white-space:pre;color:#111111;font-weight:normal;font-style:normal;transform:scale(0.9195,1.0);transform-origin:0 22.95px;">DEV-56</div>
<div style="position:absolute;left:302.08px;top:786.79px;font-size:27px;line-height:1;white-space:pre;color:#111111;font-weight:normal;font-style:normal;transform:scale(0.8892,1.0);transform-origin:0 22.95px;">GENEVE Gilbert</div>
<div style="position:absolute;left:957.7px;top:785.34px;width:28.3px;height:28.2px;border-radius:4px;background:linear-gradient(#4E4E4E 0%,#5A5A5A 55%,#8A8A8A 100%);"></div>
<svg style="position:absolute;left:957.7px;top:785.34px;overflow:visible" width="29" height="29" viewBox="0 0 29 29"><polygon points="7,22 22.3,22 14.65,9" fill="#FFFFFF"/></svg>
<div style="position:absolute;left:1005.76px;top:786.79px;font-size:27px;line-height:1;white-space:pre;color:#111111;font-weight:normal;font-style:normal;transform:scale(0.9129,1.0);transform-origin:0 22.95px;">LAVABO COLLECTIF / Devis Rapide</div>
<div style="position:absolute;left:1697.00px;top:786.79px;width:1000px;text-align:center;font-size:27px;line-height:1;white-space:pre;color:#111111;font-weight:normal;font-style:normal;transform:scale(0.9628,1.0);transform-origin:50% 22.95px;">7 200,00</div>
<div style="position:absolute;left:1876.50px;top:786.79px;width:1000px;text-align:center;font-size:27px;line-height:1;white-space:pre;color:#111111;font-weight:normal;font-style:normal;transform:scale(0.9994,1.0);transform-origin:50% 22.95px;">20/02/25</div>
<div style="position:absolute;left:2067.00px;top:788.49px;width:1000px;text-align:center;font-size:25px;line-height:1;white-space:pre;color:#1A1A1A;font-weight:normal;font-style:normal;transform:scale(0.9201,1.0);transform-origin:50% 21.25px;">Accepté</div>
<div style="position:absolute;left:2468.20px;top:778.04px;width:34.20px;height:35.30px;background:#EAEAEA;"></div>
<div style="position:absolute;left:2471px;top:782.24px;width:27.3px;height:27.3px;box-sizing:border-box;border:1.6px solid #C6C6C6;background:#FFFFFF"></div>
<svg style="position:absolute;left:2471px;top:782.24px;overflow:visible" width="28" height="28" viewBox="0 0 28 28"><path d="M3.8,5 L23,22.8 M23,5 L3.8,22.8" stroke="#333333" stroke-width="2.8"/></svg>
<div style="position:absolute;left:2634.00px;top:782.14px;width:34.00px;height:37.30px;background:#EAEAEA;"></div>
<div style="position:absolute;left:2636.3px;top:785.94px;width:27.7px;height:27.4px;box-sizing:border-box;border:1.6px solid #C6C6C6;background:#FFFFFF"></div>
<svg style="position:absolute;left:2636.3px;top:785.94px;overflow:visible" width="28" height="28" viewBox="0 0 28 28"><path d="M3.9,5.2 L23.3,22.6 M23.3,5.2 L3.9,22.6" stroke="#333333" stroke-width="2.8"/></svg>
<div style="position:absolute;left:2680px;top:780.84px;width:67.8px;height:37.7px;border-radius:14px;background:#929292"></div>
<div style="position:absolute;left:2213.90px;top:789.32px;width:1000px;text-align:center;font-size:20.5px;line-height:1;white-space:pre;color:#FFFFFF;font-weight:bold;font-style:normal;transform:scale(1.0,1.04);transform-origin:50% 17.43px;">PM2</div>
<div style="position:absolute;left:2758.00px;top:782.74px;width:34.00px;height:33.70px;background:#6A8BBB;"></div>
<div style="position:absolute;left:2275.00px;top:787.14px;width:1000px;text-align:center;font-size:26px;line-height:1;white-space:pre;color:#E9ECF2;font-weight:bold;font-style:normal;transform:scale(1.0,1.04);transform-origin:50% 22.10px;">A</div>
<div style="position:absolute;left:6.00px;top:899.56px;width:2794.00px;height:2.00px;background:#6B6B6B;"></div>
<div style="position:absolute;left:276.00px;top:835.74px;width:14.00px;height:63.82px;background:#F0A02F;"></div>
<div style="position:absolute;left:16.76px;top:854.61px;font-size:27px;line-height:1;white-space:pre;color:#111111;font-weight:normal;font-style:normal;transform:scale(0.9195,1.0);transform-origin:0 22.95px;">DEV-55</div>
<div style="position:absolute;left:302.02px;top:854.61px;font-size:27px;line-height:1;white-space:pre;color:#111111;font-weight:normal;font-style:normal;transform:scale(0.9148,1.0);transform-origin:0 22.95px;">ROBERTY-VARION Martine</div>
<div style="position:absolute;left:957.7px;top:853.16px;width:28.3px;height:28.2px;border-radius:4px;background:linear-gradient(#4E4E4E 0%,#5A5A5A 55%,#8A8A8A 100%);"></div>
<svg style="position:absolute;left:957.7px;top:853.16px;overflow:visible" width="29" height="29" viewBox="0 0 29 29"><polygon points="7,22 22.3,22 14.65,9" fill="#FFFFFF"/></svg>
<div style="position:absolute;left:1005.75px;top:854.61px;font-size:27px;line-height:1;white-space:pre;color:#111111;font-weight:normal;font-style:normal;transform:scale(0.9256,1.0);transform-origin:0 22.95px;">MAISON OSSATURE BOIS / Marché  ///  AFFAIRE : EXTENSION</div>
<div style="position:absolute;left:1697.00px;top:854.61px;width:1000px;text-align:center;font-size:27px;line-height:1;white-space:pre;color:#111111;font-weight:normal;font-style:normal;transform:scale(0.9606,1.0);transform-origin:50% 22.95px;">25 128,00</div>
<div style="position:absolute;left:1876.50px;top:854.61px;width:1000px;text-align:center;font-size:27px;line-height:1;white-space:pre;color:#111111;font-weight:normal;font-style:normal;transform:scale(0.9994,1.0);transform-origin:50% 22.95px;">19/02/25</div>
<div style="position:absolute;left:2067.00px;top:856.31px;width:1000px;text-align:center;font-size:25px;line-height:1;white-space:pre;color:#1A1A1A;font-weight:normal;font-style:normal;transform:scale(0.9201,1.0);transform-origin:50% 21.25px;">Accepté</div>
<div style="position:absolute;left:2468.20px;top:845.86px;width:34.20px;height:35.30px;background:#EAEAEA;"></div>
<div style="position:absolute;left:2471px;top:850.06px;width:27.3px;height:27.3px;box-sizing:border-box;border:1.6px solid #C6C6C6;background:#FFFFFF"></div>
<svg style="position:absolute;left:2471px;top:850.06px;overflow:visible" width="28" height="28" viewBox="0 0 28 28"><path d="M3.8,5 L23,22.8 M23,5 L3.8,22.8" stroke="#333333" stroke-width="2.8"/></svg>
<div style="position:absolute;left:2634.00px;top:849.96px;width:34.00px;height:37.30px;background:#EAEAEA;"></div>
<div style="position:absolute;left:2636.3px;top:853.76px;width:27.7px;height:27.4px;box-sizing:border-box;border:1.6px solid #C6C6C6;background:#FFFFFF"></div>
<svg style="position:absolute;left:2636.3px;top:853.76px;overflow:visible" width="28" height="28" viewBox="0 0 28 28"><path d="M3.9,5.2 L23.3,22.6 M23.3,5.2 L3.9,22.6" stroke="#333333" stroke-width="2.8"/></svg>
<div style="position:absolute;left:2680px;top:848.66px;width:67.8px;height:37.7px;border-radius:14px;background:#929292"></div>
<div style="position:absolute;left:2213.90px;top:857.13px;width:1000px;text-align:center;font-size:20.5px;line-height:1;white-space:pre;color:#FFFFFF;font-weight:bold;font-style:normal;transform:scale(1.0,1.04);transform-origin:50% 17.43px;">PM2</div>
<div style="position:absolute;left:2758.00px;top:850.56px;width:34.00px;height:33.70px;background:#6A8BBB;"></div>
<div style="position:absolute;left:2275.00px;top:854.96px;width:1000px;text-align:center;font-size:26px;line-height:1;white-space:pre;color:#E9ECF2;font-weight:bold;font-style:normal;transform:scale(1.0,1.04);transform-origin:50% 22.10px;">A</div>
<div style="position:absolute;left:6.00px;top:967.38px;width:2794.00px;height:2.00px;background:#6B6B6B;"></div>
<div style="position:absolute;left:276.00px;top:903.56px;width:14.00px;height:63.82px;background:#F0A02F;"></div>
<div style="position:absolute;left:16.76px;top:922.43px;font-size:27px;line-height:1;white-space:pre;color:#111111;font-weight:normal;font-style:normal;transform:scale(0.9195,1.0);transform-origin:0 22.95px;">DEV-54</div>
<div style="position:absolute;left:302.06px;top:922.43px;font-size:27px;line-height:1;white-space:pre;color:#111111;font-weight:normal;font-style:normal;transform:scale(0.8995,1.0);transform-origin:0 22.95px;">PERMONTIER Jean-Philippe</div>
<div style="position:absolute;left:957.7px;top:920.98px;width:28.3px;height:28.2px;border-radius:4px;background:linear-gradient(#4E4E4E 0%,#5A5A5A 55%,#8A8A8A 100%);"></div>
<svg style="position:absolute;left:957.7px;top:920.98px;overflow:visible" width="29" height="29" viewBox="0 0 29 29"><polygon points="7,22 22.3,22 14.65,9" fill="#FFFFFF"/></svg>
<div style="position:absolute;left:1005.77px;top:922.43px;font-size:27px;line-height:1;white-space:pre;color:#111111;font-weight:normal;font-style:normal;transform:scale(0.9039,1.0);transform-origin:0 22.95px;">EXTENSION / CHARPENTE COUVERTURE / % par lignes</div>
<div style="position:absolute;left:1697.00px;top:922.43px;width:1000px;text-align:center;font-size:27px;line-height:1;white-space:pre;color:#111111;font-weight:normal;font-style:normal;transform:scale(0.9606,1.0);transform-origin:50% 22.95px;">30 564,00</div>
<div style="position:absolute;left:1876.50px;top:922.43px;width:1000px;text-align:center;font-size:27px;line-height:1;white-space:pre;color:#111111;font-weight:normal;font-style:normal;transform:scale(0.9994,1.0);transform-origin:50% 22.95px;">18/02/25</div>
<div style="position:absolute;left:2067.00px;top:924.13px;width:1000px;text-align:center;font-size:25px;line-height:1;white-space:pre;color:#1A1A1A;font-weight:normal;font-style:normal;transform:scale(0.9201,1.0);transform-origin:50% 21.25px;">Accepté</div>
<div style="position:absolute;left:2468.20px;top:913.68px;width:34.20px;height:35.30px;background:#EAEAEA;"></div>
<div style="position:absolute;left:2471px;top:917.88px;width:27.3px;height:27.3px;box-sizing:border-box;border:1.6px solid #C6C6C6;background:#FFFFFF"></div>
<svg style="position:absolute;left:2471px;top:917.88px;overflow:visible" width="28" height="28" viewBox="0 0 28 28"><path d="M3.8,5 L23,22.8 M23,5 L3.8,22.8" stroke="#333333" stroke-width="2.8"/></svg>
<div style="position:absolute;left:2634.00px;top:917.78px;width:34.00px;height:37.30px;background:#EAEAEA;"></div>
<div style="position:absolute;left:2636.3px;top:921.58px;width:27.7px;height:27.4px;box-sizing:border-box;border:1.6px solid #C6C6C6;background:#FFFFFF"></div>
<svg style="position:absolute;left:2636.3px;top:921.58px;overflow:visible" width="28" height="28" viewBox="0 0 28 28"><path d="M3.9,5.2 L23.3,22.6 M23.3,5.2 L3.9,22.6" stroke="#333333" stroke-width="2.8"/></svg>
<div style="position:absolute;left:2680px;top:916.48px;width:67.8px;height:37.7px;border-radius:14px;background:#929292"></div>
<div style="position:absolute;left:2213.90px;top:924.95px;width:1000px;text-align:center;font-size:20.5px;line-height:1;white-space:pre;color:#FFFFFF;font-weight:bold;font-style:normal;transform:scale(1.0,1.04);transform-origin:50% 17.43px;">PM2</div>
<div style="position:absolute;left:2758.00px;top:918.38px;width:34.00px;height:33.70px;background:#6A8BBB;"></div>
<div style="position:absolute;left:2275.00px;top:922.78px;width:1000px;text-align:center;font-size:26px;line-height:1;white-space:pre;color:#E9ECF2;font-weight:bold;font-style:normal;transform:scale(1.0,1.04);transform-origin:50% 22.10px;">A</div>
<div style="position:absolute;left:6.00px;top:1035.20px;width:2794.00px;height:2.00px;background:#6B6B6B;"></div>
<div style="position:absolute;left:276.00px;top:971.38px;width:14.00px;height:63.82px;background:#F0A02F;"></div>
<div style="position:absolute;left:16.76px;top:990.25px;font-size:27px;line-height:1;white-space:pre;color:#111111;font-weight:normal;font-style:normal;transform:scale(0.9195,1.0);transform-origin:0 22.95px;">DEV-53</div>
<div style="position:absolute;left:302.03px;top:990.25px;font-size:27px;line-height:1;white-space:pre;color:#111111;font-weight:normal;font-style:normal;transform:scale(0.9099,1.0);transform-origin:0 22.95px;">BOUVIER_MARTIN Michelle</div>
<div style="position:absolute;left:957.7px;top:988.80px;width:28.3px;height:28.2px;border-radius:4px;background:linear-gradient(#4E4E4E 0%,#5A5A5A 55%,#8A8A8A 100%);"></div>
<svg style="position:absolute;left:957.7px;top:988.8px;overflow:visible" width="29" height="29" viewBox="0 0 29 29"><polygon points="7,22 22.3,22 14.65,9" fill="#FFFFFF"/></svg>
<div style="position:absolute;left:1005.77px;top:990.25px;font-size:27px;line-height:1;white-space:pre;color:#111111;font-weight:normal;font-style:normal;transform:scale(0.9072,1.0);transform-origin:0 22.95px;">CARRELAGE 25 X 25 / Somme</div>
<div style="position:absolute;left:1697.00px;top:990.25px;width:1000px;text-align:center;font-size:27px;line-height:1;white-space:pre;color:#111111;font-weight:normal;font-style:normal;transform:scale(0.9606,1.0);transform-origin:50% 22.95px;">16 680,00</div>
<div style="position:absolute;left:1876.50px;top:990.25px;width:1000px;text-align:center;font-size:27px;line-height:1;white-space:pre;color:#111111;font-weight:normal;font-style:normal;transform:scale(0.9994,1.0);transform-origin:50% 22.95px;">19/02/25</div>
<div style="position:absolute;left:2067.00px;top:991.95px;width:1000px;text-align:center;font-size:25px;line-height:1;white-space:pre;color:#1A1A1A;font-weight:normal;font-style:normal;transform:scale(0.9201,1.0);transform-origin:50% 21.25px;">Accepté</div>
<div style="position:absolute;left:2468.20px;top:981.50px;width:34.20px;height:35.30px;background:#EAEAEA;"></div>
<div style="position:absolute;left:2471px;top:985.70px;width:27.3px;height:27.3px;box-sizing:border-box;border:1.6px solid #C6C6C6;background:#FFFFFF"></div>
<svg style="position:absolute;left:2471px;top:985.7px;overflow:visible" width="28" height="28" viewBox="0 0 28 28"><path d="M3.8,5 L23,22.8 M23,5 L3.8,22.8" stroke="#333333" stroke-width="2.8"/></svg>
<div style="position:absolute;left:2634.00px;top:985.60px;width:34.00px;height:37.30px;background:#EAEAEA;"></div>
<div style="position:absolute;left:2636.3px;top:989.40px;width:27.7px;height:27.4px;box-sizing:border-box;border:1.6px solid #C6C6C6;background:#FFFFFF"></div>
<svg style="position:absolute;left:2636.3px;top:989.4px;overflow:visible" width="28" height="28" viewBox="0 0 28 28"><path d="M3.9,5.2 L23.3,22.6 M23.3,5.2 L3.9,22.6" stroke="#333333" stroke-width="2.8"/></svg>
<div style="position:absolute;left:2680px;top:984.30px;width:67.8px;height:37.7px;border-radius:14px;background:#929292"></div>
<div style="position:absolute;left:2213.90px;top:992.77px;width:1000px;text-align:center;font-size:20.5px;line-height:1;white-space:pre;color:#FFFFFF;font-weight:bold;font-style:normal;transform:scale(1.0,1.04);transform-origin:50% 17.43px;">PM2</div>
<div style="position:absolute;left:2758.00px;top:986.20px;width:34.00px;height:33.70px;background:#6A8BBB;"></div>
<div style="position:absolute;left:2275.00px;top:990.60px;width:1000px;text-align:center;font-size:26px;line-height:1;white-space:pre;color:#E9ECF2;font-weight:bold;font-style:normal;transform:scale(1.0,1.04);transform-origin:50% 22.10px;">A</div>
<div style="position:absolute;left:6.00px;top:1103.02px;width:2794.00px;height:2.00px;background:#6B6B6B;"></div>
<div style="position:absolute;left:276.00px;top:1039.20px;width:14.00px;height:63.82px;background:#78B733;"></div>
<div style="position:absolute;left:16.76px;top:1058.07px;font-size:27px;line-height:1;white-space:pre;color:#111111;font-weight:normal;font-style:normal;transform:scale(0.9195,1.0);transform-origin:0 22.95px;">DEV-52</div>
<div style="position:absolute;left:302.04px;top:1058.07px;font-size:27px;line-height:1;white-space:pre;color:#111111;font-weight:normal;font-style:normal;transform:scale(0.9063,1.0);transform-origin:0 22.95px;">BILLANCOURT Marie_Louise</div>
<div style="position:absolute;left:957.7px;top:1056.62px;width:28.3px;height:28.2px;border-radius:4px;background:linear-gradient(#4E4E4E 0%,#5A5A5A 55%,#8A8A8A 100%);"></div>
<svg style="position:absolute;left:957.7px;top:1056.62px;overflow:visible" width="29" height="29" viewBox="0 0 29 29"><polygon points="7,22 22.3,22 14.65,9" fill="#FFFFFF"/></svg>
<div style="position:absolute;left:1005.77px;top:1058.07px;font-size:27px;line-height:1;white-space:pre;color:#111111;font-weight:normal;font-style:normal;transform:scale(0.8965,1.0);transform-origin:0 22.95px;">ISOLATION COMBLES CEE /</div>
<div style="position:absolute;left:1697.00px;top:1058.07px;width:1000px;text-align:center;font-size:27px;line-height:1;white-space:pre;color:#111111;font-weight:normal;font-style:normal;transform:scale(0.9628,1.0);transform-origin:50% 22.95px;">8 800,00</div>
<div style="position:absolute;left:1876.50px;top:1058.07px;width:1000px;text-align:center;font-size:27px;line-height:1;white-space:pre;color:#111111;font-weight:normal;font-style:normal;transform:scale(0.9994,1.0);transform-origin:50% 22.95px;">18/02/25</div>
<div style="position:absolute;left:2067.00px;top:1059.77px;width:1000px;text-align:center;font-size:25px;line-height:1;white-space:pre;color:#1A1A1A;font-weight:normal;font-style:normal;transform:scale(0.9201,1.0);transform-origin:50% 21.25px;">Accepté</div>
<div style="position:absolute;left:2468.20px;top:1049.32px;width:34.20px;height:35.30px;background:#EAEAEA;"></div>
<div style="position:absolute;left:2471px;top:1053.52px;width:27.3px;height:27.3px;box-sizing:border-box;border:1.6px solid #C6C6C6;background:#FFFFFF"></div>
<svg style="position:absolute;left:2471px;top:1053.52px;overflow:visible" width="28" height="28" viewBox="0 0 28 28"><path d="M3.8,5 L23,22.8 M23,5 L3.8,22.8" stroke="#333333" stroke-width="2.8"/></svg>
<div style="position:absolute;left:2634.00px;top:1053.42px;width:34.00px;height:37.30px;background:#EAEAEA;"></div>
<div style="position:absolute;left:2636.3px;top:1057.22px;width:27.7px;height:27.4px;box-sizing:border-box;border:1.6px solid #C6C6C6;background:#FFFFFF"></div>
<svg style="position:absolute;left:2636.3px;top:1057.22px;overflow:visible" width="28" height="28" viewBox="0 0 28 28"><path d="M3.9,5.2 L23.3,22.6 M23.3,5.2 L3.9,22.6" stroke="#333333" stroke-width="2.8"/></svg>
<div style="position:absolute;left:2680px;top:1052.12px;width:67.8px;height:37.7px;border-radius:14px;background:#929292"></div>
<div style="position:absolute;left:2213.90px;top:1060.60px;width:1000px;text-align:center;font-size:20.5px;line-height:1;white-space:pre;color:#FFFFFF;font-weight:bold;font-style:normal;transform:scale(1.0,1.04);transform-origin:50% 17.43px;">PM2</div>
<div style="position:absolute;left:2758.00px;top:1054.02px;width:34.00px;height:33.70px;background:#6A8BBB;"></div>
<div style="position:absolute;left:2275.00px;top:1058.42px;width:1000px;text-align:center;font-size:26px;line-height:1;white-space:pre;color:#E9ECF2;font-weight:bold;font-style:normal;transform:scale(1.0,1.04);transform-origin:50% 22.10px;">A</div>
<div style="position:absolute;left:6.00px;top:1170.84px;width:2794.00px;height:2.00px;background:#6B6B6B;"></div>
<div style="position:absolute;left:276.00px;top:1107.02px;width:14.00px;height:63.82px;background:#F0A02F;"></div>
<div style="position:absolute;left:16.76px;top:1125.89px;font-size:27px;line-height:1;white-space:pre;color:#111111;font-weight:normal;font-style:normal;transform:scale(0.9195,1.0);transform-origin:0 22.95px;">DEV-51</div>
<div style="position:absolute;left:302.09px;top:1113.49px;font-size:27px;line-height:1;white-space:pre;color:#111111;font-weight:normal;font-style:normal;transform:scale(0.8865,1.0);transform-origin:0 22.95px;">BERNARDIN-VANSON JEAN-MICHEL</div>
<div style="position:absolute;left:302.06px;top:1139.79px;font-size:27px;line-height:1;white-space:pre;color:#111111;font-weight:normal;font-style:normal;transform:scale(0.896,1.0);transform-origin:0 22.95px;">VEILLON MARIE-LOUISE</div>
<div style="position:absolute;left:957.7px;top:1124.44px;width:28.3px;height:28.2px;border-radius:4px;background:linear-gradient(#4E4E4E 0%,#5A5A5A 55%,#8A8A8A 100%);"></div>
<svg style="position:absolute;left:957.7px;top:1124.44px;overflow:visible" width="29" height="29" viewBox="0 0 29 29"><polygon points="7,22 22.3,22 14.65,9" fill="#FFFFFF"/></svg>
<div style="position:absolute;left:1005.74px;top:1125.89px;font-size:27px;line-height:1;white-space:pre;color:#111111;font-weight:normal;font-style:normal;transform:scale(0.9327,1.0);transform-origin:0 22.95px;">BATIMENT ANNEXE - Devis Pro / %Gobal</div>
<div style="position:absolute;left:1697.00px;top:1125.89px;width:1000px;text-align:center;font-size:27px;line-height:1;white-space:pre;color:#111111;font-weight:normal;font-style:normal;transform:scale(0.9606,1.0);transform-origin:50% 22.95px;">14 430,00</div>
<div style="position:absolute;left:1876.50px;top:1125.89px;width:1000px;text-align:center;font-size:27px;line-height:1;white-space:pre;color:#111111;font-weight:normal;font-style:normal;transform:scale(0.9994,1.0);transform-origin:50% 22.95px;">18/02/25</div>
<div style="position:absolute;left:2067.00px;top:1127.59px;width:1000px;text-align:center;font-size:25px;line-height:1;white-space:pre;color:#1A1A1A;font-weight:normal;font-style:normal;transform:scale(0.9201,1.0);transform-origin:50% 21.25px;">Accepté</div>
<div style="position:absolute;left:2468.20px;top:1117.14px;width:34.20px;height:35.30px;background:#EAEAEA;"></div>
<div style="position:absolute;left:2471px;top:1121.34px;width:27.3px;height:27.3px;box-sizing:border-box;border:1.6px solid #C6C6C6;background:#FFFFFF"></div>
<svg style="position:absolute;left:2471px;top:1121.34px;overflow:visible" width="28" height="28" viewBox="0 0 28 28"><path d="M3.8,5 L23,22.8 M23,5 L3.8,22.8" stroke="#333333" stroke-width="2.8"/></svg>
<div style="position:absolute;left:2634.00px;top:1121.24px;width:34.00px;height:37.30px;background:#EAEAEA;"></div>
<div style="position:absolute;left:2636.3px;top:1125.04px;width:27.7px;height:27.4px;box-sizing:border-box;border:1.6px solid #C6C6C6;background:#FFFFFF"></div>
<svg style="position:absolute;left:2636.3px;top:1125.04px;overflow:visible" width="28" height="28" viewBox="0 0 28 28"><path d="M3.9,5.2 L23.3,22.6 M23.3,5.2 L3.9,22.6" stroke="#333333" stroke-width="2.8"/></svg>
<div style="position:absolute;left:2680px;top:1119.94px;width:67.8px;height:37.7px;border-radius:14px;background:#929292"></div>
<div style="position:absolute;left:2213.90px;top:1128.41px;width:1000px;text-align:center;font-size:20.5px;line-height:1;white-space:pre;color:#FFFFFF;font-weight:bold;font-style:normal;transform:scale(1.0,1.04);transform-origin:50% 17.43px;">PM2</div>
<div style="position:absolute;left:2758.00px;top:1121.84px;width:34.00px;height:33.70px;background:#6A8BBB;"></div>
<div style="position:absolute;left:2275.00px;top:1126.24px;width:1000px;text-align:center;font-size:26px;line-height:1;white-space:pre;color:#E9ECF2;font-weight:bold;font-style:normal;transform:scale(1.0,1.04);transform-origin:50% 22.10px;">A</div>
<div style="position:absolute;left:2103.20px;top:291.00px;width:2.00px;height:881.84px;background:#5A5A5A;"></div>
<div style="position:absolute;left:2292.50px;top:291.00px;width:2.00px;height:881.84px;background:#5A5A5A;"></div>
<div style="position:absolute;left:2460.30px;top:291.00px;width:2.00px;height:881.84px;background:#5A5A5A;"></div>
<div style="position:absolute;left:6.00px;top:1478.00px;width:2794.00px;height:103.00px;background:#DEDACB;"></div>
<svg style="position:absolute;left:54px;top:1517px;overflow:visible" width="56" height="45" viewBox="0 0 56 45"><rect x="2.6" y="2.1" width="50.5" height="39" fill="none" stroke="#FFFFFF" stroke-width="1"/><rect x="3.6" y="3.1" width="48.5" height="37" fill="#FFFFFF" stroke="#111111" stroke-width="2.3"/><polyline points="4,4 27.8,29.9 51.6,4" fill="none" stroke="#111111" stroke-width="2"/><line x1="4.5" y1="39.5" x2="19.5" y2="22" stroke="#111111" stroke-width="2"/><line x1="51.2" y1="39.5" x2="36" y2="22.3" stroke="#111111" stroke-width="2"/></svg>
<div style="position:absolute;left:122.78px;top:1525.87px;font-size:25.8px;line-height:1;white-space:pre;color:#699A42;font-weight:normal;font-style:normal;transform:scale(1.0,1.04);transform-origin:0 21.93px;text-decoration:underline;text-decoration-thickness:2px;text-underline-offset:3px;">Nous contacter</div>
<div style="position:absolute;left:405.2px;top:1508.4px;width:58.4px;height:59px;box-sizing:border-box;border-radius:50%;border:1.2px solid #474747;background:#5A5859"></div>
<div style="position:absolute;left:421.00px;top:1534.90px;width:32.60px;height:6.00px;background:#FFFFFF;"></div>
<div style="position:absolute;left:434.20px;top:1521.70px;width:6.20px;height:32.40px;background:#FFFFFF;"></div>
<div style="position:absolute;left:543.00px;top:1504.00px;width:30.00px;height:30.00px;background:#F0A02F;"></div>
<div style="position:absolute;left:543.00px;top:1542.00px;width:30.00px;height:30.00px;background:#1F5CC0;"></div>
<div style="position:absolute;left:764.70px;top:1503.80px;width:29.80px;height:29.70px;background:#78B733;"></div>
<div style="position:absolute;left:764.70px;top:1542.30px;width:29.80px;height:29.40px;background:#B75AA9;"></div>
<div style="position:absolute;left:583.24px;top:1507.50px;font-size:22px;line-height:1;white-space:pre;color:#55524C;font-weight:normal;font-style:normal;transform:scale(1.0,1.04);transform-origin:0 18.70px;">Devis Pro</div>
<div style="position:absolute;left:583.24px;top:1547.00px;font-size:22px;line-height:1;white-space:pre;color:#55524C;font-weight:normal;font-style:normal;transform:scale(1.0,1.04);transform-origin:0 18.70px;">Devis Rapide</div>
<div style="position:absolute;left:804.94px;top:1507.50px;font-size:22px;line-height:1;white-space:pre;color:#55524C;font-weight:normal;font-style:normal;transform:scale(1.0,1.04);transform-origin:0 18.70px;">Devis Pro CEE</div>
<div style="position:absolute;left:804.94px;top:1547.00px;font-size:22px;line-height:1;white-space:pre;color:#55524C;font-weight:normal;font-style:normal;transform:scale(1.0,1.04);transform-origin:0 18.70px;">Devis Pro depuis Excel</div>
<div style="position:absolute;left:1070.78px;top:1507.50px;font-size:22px;line-height:1;white-space:pre;color:#55524C;font-weight:normal;font-style:normal;transform:scale(1.0,1.04);transform-origin:0 18.70px;">Visi</div>
<div style="position:absolute;left:1076.24px;top:1547.00px;font-size:22px;line-height:1;white-space:pre;color:#55524C;font-weight:normal;font-style:normal;transform:scale(1.0,1.04);transform-origin:0 18.70px;">Lis</div>
<div style="position:absolute;left:1115.70px;top:1500.30px;width:40.30px;height:74.90px;background:#8A92B2;"></div>
<div style="position:absolute;left:1120.00px;top:1504.50px;width:31.70px;height:29.00px;background:#F2F2F6;"></div>
<svg style="position:absolute;left:1120px;top:1504.5px;overflow:visible" width="32" height="29" viewBox="0 0 32 29"><path d="M7.5,6.5 L24.5,22.5 M24.5,6.5 L7.5,22.5" stroke="#1A1A1A" stroke-width="3.2"/></svg>
<div style="position:absolute;left:1120.00px;top:1542.50px;width:31.70px;height:29.00px;background:#F2F2F6;"></div>
<svg style="position:absolute;left:1120px;top:1542.5px;overflow:visible" width="32" height="29" viewBox="0 0 32 29"><path d="M7.5,6.5 L24.5,22.5 M24.5,6.5 L7.5,22.5" stroke="#1A1A1A" stroke-width="3.2"/></svg>
<div style="position:absolute;left:1165.90px;top:1507.50px;font-size:22px;line-height:1;white-space:pre;color:#55524C;font-weight:normal;font-style:normal;transform:scale(1.0,1.04);transform-origin:0 18.70px;">Cochée : visible sur page ¨Accueil¨</div>
<div style="position:absolute;left:1165.90px;top:1547.00px;font-size:22px;line-height:1;white-space:pre;color:#55524C;font-weight:normal;font-style:normal;transform:scale(1.0,1.04);transform-origin:0 18.70px;">Cochée : visible dans ¨Bibli dévis défilants¨</div>
<div style="position:absolute;left:2079.50px;top:1527.55px;font-size:25px;line-height:1;white-space:pre;color:#5DB1C9;font-weight:normal;font-style:normal;transform:scale(1.0,1.04);transform-origin:0 21.25px;">Devis :</div>
<div style="position:absolute;left:2159.72px;top:1518.20px;font-size:36px;line-height:1;white-space:pre;color:#5DB1C9;font-weight:normal;font-style:normal;transform:scale(1.0,1.04);transform-origin:0 30.60px;">13</div>
<div style="position:absolute;left:2458.68px;top:1523.86px;font-size:26.4px;line-height:1;white-space:pre;color:#55524C;font-weight:normal;font-style:italic;transform:scale(1.0,1.04);transform-origin:0 22.44px;">ÉCRAN LISTE DEVIS</div>
<svg style="position:absolute;left:662px;top:154px;overflow:visible" width="90" height="90" viewBox="0 0 90 90"><circle cx="45" cy="45" r="45" fill="#EE7C73"/><path d="M42,17.6 L52.8,17.6 L52.8,69.8 L42,69.8 L42,34 C38,36.8 33,39 29,39.9 L29,30.3 C35,28.5 40,23 42,17.6 Z" fill="#FFFFFF" fill-rule="evenodd"/></svg>
<svg style="position:absolute;left:286px;top:855px;overflow:visible" width="90" height="90" viewBox="0 0 90 90"><circle cx="45" cy="45" r="45" fill="#EE7C73"/><path d="M25.5,69.8 L61.2,69.8 L61.2,59.6 L42.3,59.6 L54.5,48 C58.5,44 61,39.5 61,33.5 C61,24 53.5,17.6 43.5,17.6 C33.5,17.6 27,24.5 26.5,33.5 L36.8,34.5 C37,30 39.5,26.5 43.5,26.5 C47.5,26.5 49.8,29.5 49.8,33 C49.8,37 47.5,39.5 44.5,42.5 L31,55 C27,59 25.5,63 25.5,69.8 Z" fill="#FFFFFF" fill-rule="evenodd"/></svg>
<svg style="position:absolute;left:1784px;top:152.6px;overflow:visible" width="90" height="90" viewBox="0 0 90 90"><circle cx="45" cy="45" r="45" fill="#EE7C73"/><path d="M26.8,33 C27.5,24 34.5,18.5 43.5,18.5 C52.5,18.5 58.3,24 58.3,31.5 C58.3,36.5 56,40 52.5,42.3 C57.5,44.5 61.2,49 61.2,55.5 C61.2,65 53.5,72 43.5,72 C33.5,72 26.5,65.5 26,56.5 L37,55.5 C37.3,59.8 40,63 43.7,63 C47.5,63 49.8,59.5 49.8,55.2 C49.8,50.5 47,47.5 42.5,47.5 L38.6,47.5 L39.6,38.7 L42.5,38.7 C46,38.7 48,36.5 48,33.2 C48,29.8 46,27.5 43.3,27.5 C40,27.5 37.8,30 37.5,33.6 Z" fill="#FFFFFF" fill-rule="evenodd"/></svg>
<svg style="position:absolute;left:2516px;top:55px;overflow:visible" width="90" height="90" viewBox="0 0 90 90"><circle cx="45" cy="45" r="45" fill="#EE7C73"/><path d="M45.4,17.6 L56.2,17.6 L56.2,49.8 L62.7,49.8 L62.7,59.6 L56.2,59.6 L56.2,69.8 L46,69.8 L46,59.6 L25,59.6 L25,49.8 Z M46,35 L36,49.8 L46,49.8 Z" fill="#FFFFFF" fill-rule="evenodd"/></svg>
</body></html>
